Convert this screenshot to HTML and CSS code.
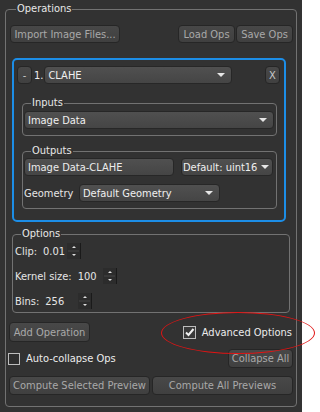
FILE: index.html
```html
<!DOCTYPE html>
<html lang="en">
<head>
    <meta charset="UTF-8">
    <meta name="viewport" content="width=device-width, initial-scale=1.0">
    <title>Operations</title>
    <link rel="stylesheet" href="styles.css">
</head>
<body>
  <div class="panel">
    <fieldset class="group ops">
      <legend>Operations</legend>
      <div class="toolbar">
        <button class="btn import">Import Image Files...</button>
        <button class="btn ops_btn">Load Ops</button>
        <button class="btn ops_btn">Save Ops</button>
      </div>

      <div class="op_box">
        <div class="op_head">
          <button class="btn small">-</button>
          <span class="op_num">1.</span>
          <div class="combo op_name">CLAHE</div>
          <button class="btn small close">X</button>
        </div>
        <fieldset class="group sub inputs">
          <legend>Inputs</legend>
          <div class="combo input_sel">Image Data</div>
        </fieldset>
        <fieldset class="group sub outputs">
          <legend>Outputs</legend>
          <div class="out_row">
            <div class="field out_name">Image Data-CLAHE</div>
            <div class="combo out_type">Default: uint16</div>
          </div>
          <div class="out_row geom_row">
            <span class="geom_label">Geometry</span>
            <div class="combo geom">Default Geometry</div>
          </div>
        </fieldset>
      </div>

      <fieldset class="group options">
        <legend>Options</legend>
        <div class="opt clip">
          <span>Clip:</span>
          <span class="val">0.01</span>
          <svg class="spin" width="14" height="16" viewBox="0 0 14 16"><rect x="0" y="0" width="13" height="16" fill="#2c2c2c"/><line x1="13.5" y1="0" x2="13.5" y2="16" stroke="#1a1a1a"/><line x1="1" y1="8" x2="12" y2="8" stroke="#474747"/><path d="M5 5h4l-2-2z" fill="#e0e0e0"/><path d="M5 11h4l-2 2z" fill="#e0e0e0"/></svg>
        </div>
        <div class="opt kernel">
          <span>Kernel size:</span>
          <span class="val">100</span>
          <svg class="spin" width="14" height="16" viewBox="0 0 14 16"><rect x="0" y="0" width="13" height="16" fill="#2c2c2c"/><line x1="13.5" y1="0" x2="13.5" y2="16" stroke="#1a1a1a"/><line x1="1" y1="8" x2="12" y2="8" stroke="#474747"/><path d="M5 5h4l-2-2z" fill="#e0e0e0"/><path d="M5 11h4l-2 2z" fill="#e0e0e0"/></svg>
        </div>
        <div class="opt bins">
          <span>Bins:</span>
          <span class="val">256</span>
          <svg class="spin" width="14" height="16" viewBox="0 0 14 16"><rect x="0" y="0" width="13" height="16" fill="#2c2c2c"/><line x1="13.5" y1="0" x2="13.5" y2="16" stroke="#1a1a1a"/><line x1="1" y1="8" x2="12" y2="8" stroke="#474747"/><path d="M5 5h4l-2-2z" fill="#e0e0e0"/><path d="M5 11h4l-2 2z" fill="#e0e0e0"/></svg>
        </div>
      </fieldset>

      <div class="bar add_row">
        <button class="btn add_op">Add Operation</button>
        <label class="check adv">
          <span class="box checked"><svg width="11" height="11" viewBox="0 0 11 11"><path d="M2 5.5l2.5 2.5 5-6" fill="none" stroke="#f0f0f0" stroke-width="2"/></svg></span>
          Advanced Options
        </label>
      </div>
      <div class="bar collapse_row">
        <label class="check auto">
          <span class="box"></span>
          Auto-collapse Ops
        </label>
        <button class="btn collapse">Collapse All</button>
      </div>
      <div class="bar compute_row">
        <button class="btn compute">Compute Selected Preview</button>
        <button class="btn compute">Compute All Previews</button>
      </div>
    </fieldset>
    <div class="ring"></div>
  </div>
</body>
</html>
```

FILE: styles.css
```css
*{
  margin:0;
  padding:0;
  box-sizing: border-box;
}
body{
  background: #ffffff;
  font-family: "DejaVu Sans Condensed", "Liberation Sans", Arial, sans-serif;
  font-size: 11px;
  color: #e6e6e6;
}
.panel{
  width: 302px;
  height: 412px;
  background: #323232;
  padding: 2px 0 0 5px;
  position: relative;
}

/* group boxes */
.group{
  border: 1px solid #727272;
  border-radius: 4px;
  min-width: 0;
}
.group legend{
  line-height: 14px;
  padding: 0 1px;
  color: #e8e8e8;
}
.ops{
  width: 292px;
  height: 405px;
  padding: 0 3px;
}
.ops > legend{
  margin-left: 7px;
}

/* buttons */
.btn{
  font: inherit;
  color: #a9a9a9;
  background: linear-gradient(#484848, #404040);
  border: 1px solid #262626;
  border-radius: 4px;
  height: 18px;
  display: flex;
  align-items: center;
  justify-content: center;
  white-space: nowrap;
  flex: none;
}
.toolbar{
  display: flex;
  margin: 9px 0 0 1px;
}
.import{
  width: 110px;
  margin-right: auto;
}
.ops_btn{
  width: 57px;
}
.ops_btn + .ops_btn{
  margin-left: 1px;
}
.small{
  width: 15px;
  color: #c8c8c8;
}

/* combos / fields */
.combo, .field{
  height: 18px;
  background: linear-gradient(#505050, #454545);
  border: 1px solid #272727;
  border-radius: 4px;
  color: #f0f0f0;
  display: flex;
  align-items: center;
  padding: 0 6px 0 3px;
  white-space: nowrap;
  flex: none;
}
.combo::after{
  content: "";
  margin-left: auto;
  border-left: 4px solid transparent;
  border-right: 4px solid transparent;
  border-top: 4px solid #e6e6e6;
}

/* operation box */
.op_box{
  margin: 15px 0 0 3px;
  width: 274px;
  border: 2px solid #1c8de6;
  border-radius: 5px;
  padding: 6px 4px 11px 3px;
}
.op_head{
  display: flex;
  align-items: center;
}
.op_num{
  margin: 0 1px 0 2px;
  color: #eeeeee;
}
.op_name{
  width: 188px;
}
.close{
  margin-left: auto;
}
.sub{
  width: 255px;
  margin-left: 5px;
  padding: 0 3px 6px 1px;
}
.sub legend{
  margin-left: 7px;
}
.inputs{
  margin-top: 12px;
}
.input_sel{
  margin-top: 1px;
  width: 250px;
}
.outputs{
  margin-top: 8px;
}
.out_row{
  display: flex;
  align-items: center;
}
.out_name{
  width: 150px;
  color: #ececec;
}
.out_type{
  width: 92px;
  margin-left: 7px;
  padding: 0 3px 0 1px;
}
.out_type::after{
  margin-left: 4px;
}
.geom_row{
  margin-top: 8px;
}
.geom_label{
  width: 55px;
  flex: none;
}
.geom{
  width: 141px;
}

/* options */
.options{
  width: 278px;
  margin: 5px 0 0 3px;
  padding: 2px 2px 3px 2px;
}
.options legend{
  margin-left: 6px;
}
.opt{
  display: flex;
  align-items: center;
  height: 16px;
}
.opt + .opt{
  margin-top: 9px;
}
.val{
  margin-left: 6px;
}
.spin{
  display: block;
}
.clip .spin{
  margin-left: 2px;
}
.kernel .spin{
  margin-left: 6px;
}
.bins .spin{
  margin-left: 14px;
}

/* bottom rows */
.bar{
  display: flex;
  align-items: center;
}
.add_row{
  margin-top: 9px;
}
.add_op{
  width: 81px;
  height: 20px;
}
.check{
  display: flex;
  align-items: center;
  color: #ececec;
}
.box{
  width: 12px;
  height: 12px;
  border: 1px solid #bdbdbd;
  background: #2e2e2e;
  margin-right: 6px;
  display: flex;
  align-items: center;
  justify-content: center;
}
.box.checked{
  width: 13px;
  height: 13px;
  background: #3a3a3a;
}
.adv{
  margin-left: auto;
  margin-right: 1px;
}
.collapse_row{
  margin-top: 7px;
}
.auto{
  margin-left: -1px;
}
.collapse{
  margin-left: auto;
  width: 65px;
  height: 19px;
}
.compute_row{
  margin-top: 8px;
  justify-content: space-between;
}
.compute{
  width: 141px;
  height: 19px;
}

/* red highlight drawn over the panel */
.ring{
  position: absolute;
  left: 161px;
  top: 312px;
  width: 154px;
  height: 42px;
  border: 1px solid #e01414;
  border-radius: 50%;
}
```
